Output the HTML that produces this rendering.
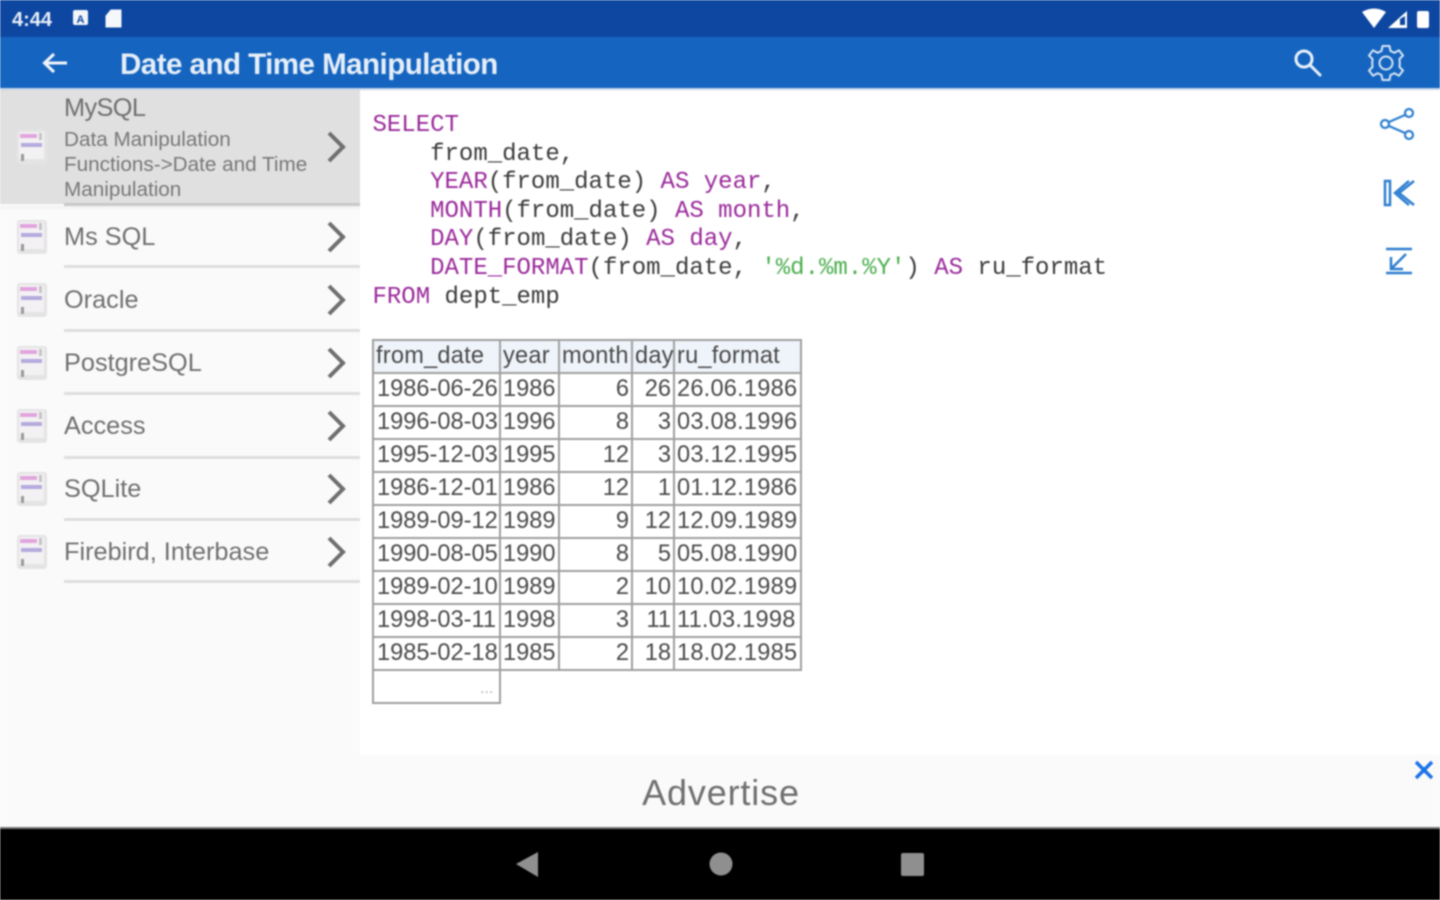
<!DOCTYPE html>
<html><head><meta charset="utf-8"><title>Date and Time Manipulation</title>
<style>
*{box-sizing:border-box}
html,body{margin:0;padding:0;width:1440px;height:900px;overflow:hidden;background:#fff}
body{font-family:"Liberation Sans",sans-serif;position:relative}
.a{position:absolute;white-space:nowrap}
#wrap{position:absolute;left:0;top:0;width:1440px;height:900px;filter:blur(.75px);overflow:hidden}
.t{font-size:25.3px;color:#707070;left:64px;line-height:30px;margin-top:1px}
.s{font-size:20.7px;color:#787878;left:64px;line-height:25px}
.d{position:absolute;left:64px;width:296px;height:3px;background:#dedede}
pre{position:absolute;left:372.500px;top:112px;margin:0;font:24px/28.6px "Liberation Mono",monospace;color:#3c3c3c}
.k{color:#9a2a9a}.g{color:#4caf50}
table{position:absolute;left:372px;top:338.500px;border-collapse:collapse;table-layout:fixed;width:428px;font-size:23.6px;color:#4a4a4a}
td{border:2px solid #a0a0a0;height:33px;padding:0 2px 0 2px;line-height:29px;white-space:nowrap;overflow:hidden}
td:first-child{padding-left:3px}
td:last-child{letter-spacing:.22px}
tr.h td{background:#eff4fa;color:#4a4a4a;letter-spacing:.22px}
tr.h td:first-child{padding-left:2px}
.r{text-align:right}
</style></head><body>
<div id="wrap">
<div class="a" style="left:0;top:0;width:1440px;height:37px;background:#0d47a1"></div>
<div class="a" style="left:0;top:37px;width:1440px;height:51px;background:#1565c0"></div>
<div class="a" style="left:0;top:88px;width:1440px;height:2px;background:#c3d5ea"></div>
<div class="a" style="left:12px;top:9px;font-size:20px;line-height:23px;color:#e8eef7;font-weight:bold">4:44</div>
<svg class="a" style="left:72px;top:9px" width="18" height="18"><rect x="1" y="1" width="15" height="15" rx="2" fill="#f2f5fa"/><text x="8.5" y="14" font-size="11" font-weight="bold" text-anchor="middle" fill="#0d47a1" font-family="Liberation Sans">A</text></svg>
<svg class="a" style="left:104px;top:9px" width="20" height="20"><path d="M7 1H17V18H2V7Z" fill="#f5f7fb" stroke="#f5f7fb" stroke-linejoin="round"/></svg>
<svg class="a" style="left:1360px;top:8px" width="74" height="24">
<path d="M2 4Q14-3 26 4L14 20Z" fill="#fff"/>
<path d="M28 20L47 3V20Z" fill="#fff"/><path d="M40 11V17H45V8Z" fill="#0d47a1"/>
<rect x="57" y="3" width="12" height="17" rx="2" fill="#fff"/></svg>

<svg class="a" style="left:40px;top:48px" width="30" height="30" fill="none" stroke="#eef3fa" stroke-width="3"><path d="M27 15H5M14 6L4.500 15L14 24"/></svg>
<div class="a" style="left:120px;top:47px;font-size:30px;line-height:36px;font-weight:bold;color:#e6eef8;letter-spacing:-.55px;transform-origin:left;transform:scaleX(.985)">Date and Time Manipulation</div>
<svg class="a" style="left:1290px;top:45px" width="34" height="34" fill="none" stroke="#e8f0f9" stroke-width="3"><circle cx="14" cy="14" r="8"/><path d="M20 20L30 30" stroke-linecap="round"/></svg>
<svg class="a" style="left:1366px;top:43px" width="40" height="40" fill="none" stroke="#d5e3f3" stroke-width="2"><circle cx="20" cy="20" r="6.500"/><path d="M16.500 3H23.500L24.500 8L28.500 9.800L33 7.300L37 12.500L33.500 16L33.800 20L33.500 24L37 27.500L33 32.700L28.500 30.200L24.500 32L23.500 37H16.500L15.500 32L11.500 30.200L7 32.700L3 27.500L6.500 24L6.200 20L6.500 16L3 12.500L7 7.300L11.500 9.800L15.500 8Z" stroke-linejoin="round"/></svg>

<div class="a" style="left:0;top:90px;width:360px;height:665px;background:#fafafa"></div>
<div class="a" style="left:0;top:90px;width:360px;height:114px;background:#e0e0e0"></div>
<div class="a" style="left:64px;top:203px;width:296px;height:3px;background:#c8c8c8"></div>
<div class="a" style="left:0;top:206px;width:360px;height:3px;background:#f4f4f4"></div>

<div class="a t" style="top:92px;letter-spacing:-.6px">MySQL</div>
<div class="a s" style="top:126.500px">Data Manipulation</div>
<div class="a s" style="top:151.500px">Functions-&gt;Date and Time</div>
<div class="a s" style="top:176.500px">Manipulation</div>
<div class="a t" style="top:221px">Ms SQL</div>
<div class="a t" style="top:284px">Oracle</div>
<div class="a t" style="top:347px">PostgreSQL</div>
<div class="a t" style="top:410px">Access</div>
<div class="a t" style="top:473px">SQLite</div>
<div class="a t" style="top:536px">Firebird, Interbase</div>

<div class="d" style="top:265px"></div><div class="d" style="top:329px"></div><div class="d" style="top:392px"></div><div class="d" style="top:456px"></div><div class="d" style="top:518px"></div><div class="d" style="top:580px"></div>

<svg class="a" style="left:0;top:0" width="360" height="600">
<defs><g id="ic"><rect x="0" y="0" width="30" height="34" rx="3" fill="#e4e4e4"/><rect x="2" y="2" width="25" height="27" fill="#f3f1f3"/><rect x="3" y="4" width="17" height="4" fill="#e2a5de"/><rect x="22" y="3" width="3" height="7" fill="#c4c4c4"/><rect x="4" y="13" width="21" height="4" fill="#b5aadd"/><rect x="4" y="24" width="3" height="7" fill="#9a9a9a"/></g>
<g id="ch"><path d="M-7 -14L7 0L-7 14" fill="none" stroke="#6f6f6f" stroke-width="4"/></g></defs>
<use href="#ic" x="17" y="130"/><use href="#ic" x="17" y="220"/><use href="#ic" x="17" y="283"/><use href="#ic" x="17" y="346"/><use href="#ic" x="17" y="409"/><use href="#ic" x="17" y="472"/><use href="#ic" x="17" y="535"/>
<use href="#ch" x="336" y="147"/><use href="#ch" x="336" y="237"/><use href="#ch" x="336" y="300"/><use href="#ch" x="336" y="363"/><use href="#ch" x="336" y="426"/><use href="#ch" x="336" y="489"/><use href="#ch" x="336" y="552"/>
</svg>

<pre><span class="k">SELECT</span>
    from_date,
    <span class="k">YEAR</span>(from_date) <span class="k">AS</span> <span class="k">year</span>,
    <span class="k">MONTH</span>(from_date) <span class="k">AS</span> <span class="k">month</span>,
    <span class="k">DAY</span>(from_date) <span class="k">AS</span> <span class="k">day</span>,
    <span class="k">DATE_FORMAT</span>(from_date, <span class="g">'%d.%m.%Y'</span>) <span class="k">AS</span> ru_format
<span class="k">FROM</span> dept_emp</pre>

<table><colgroup><col style="width:127px"><col style="width:59px"><col style="width:73px"><col style="width:42px"><col style="width:127px"></colgroup>
<tr class="h"><td>from_date</td><td>year</td><td>month</td><td>day</td><td>ru_format</td></tr>
<tr><td>1986-06-26</td><td>1986</td><td class="r">6</td><td class="r">26</td><td>26.06.1986</td></tr>
<tr><td>1996-08-03</td><td>1996</td><td class="r">8</td><td class="r">3</td><td>03.08.1996</td></tr>
<tr><td>1995-12-03</td><td>1995</td><td class="r">12</td><td class="r">3</td><td>03.12.1995</td></tr>
<tr><td>1986-12-01</td><td>1986</td><td class="r">12</td><td class="r">1</td><td>01.12.1986</td></tr>
<tr><td>1989-09-12</td><td>1989</td><td class="r">9</td><td class="r">12</td><td>12.09.1989</td></tr>
<tr><td>1990-08-05</td><td>1990</td><td class="r">8</td><td class="r">5</td><td>05.08.1990</td></tr>
<tr><td>1989-02-10</td><td>1989</td><td class="r">2</td><td class="r">10</td><td>10.02.1989</td></tr>
<tr><td>1998-03-11</td><td>1998</td><td class="r">3</td><td class="r">11</td><td>11.03.1998</td></tr>
<tr><td>1985-02-18</td><td>1985</td><td class="r">2</td><td class="r">18</td><td>18.02.1985</td></tr>
</table>
<div class="a" style="left:372px;top:669px;width:129px;height:35px;border:2px solid #a0a0a0;border-top:0"></div>
<div class="a" style="left:480px;top:682px;font-size:16px;line-height:14px;color:#aaa">...</div>

<svg class="a" style="left:1375px;top:100px" width="50" height="190" fill="none" stroke="#2f7fd0" stroke-width="2.200">
<circle cx="10" cy="24" r="4"/><circle cx="34" cy="13" r="4"/><circle cx="34" cy="35" r="4"/><path d="M14 22L30 15M14 26L30 33"/>
<path d="M10 81H15V105H10ZM39 81L24 93L39 105M34 81L20 93L34 105" stroke-width="2.500"/>
<path d="M11 149H37M11 173H37M31 154L16 169M16 157V169H28" stroke-width="2.500"/>
</svg>

<div class="a" style="left:0;top:755px;width:1440px;height:73px;background:#fafafa"></div>
<div class="a" style="left:1px;top:755px;width:1440px;text-align:center;font-size:36px;line-height:75px;color:#707070;letter-spacing:.85px">Advertise</div>
<svg class="a" style="left:1412px;top:758px" width="24" height="24"><path d="M4 4L20 20M20 4L4 20" stroke="#1a73e8" stroke-width="3.500"/></svg>

<div class="a" style="left:0;top:828px;width:1440px;height:72px;background:#000"></div>
<div class="a" style="left:0;top:827px;width:1440px;height:2px;background:#777"></div>
<svg class="a" style="left:500px;top:840px" width="440" height="50">
<path d="M16 24L38 12V37Z" fill="#8f8f8f"/><circle cx="221" cy="24" r="11.500" fill="#8f8f8f"/><rect x="401" y="13" width="23" height="23" rx="2" fill="#8f8f8f"/>
</svg>
</div>
</body></html>
